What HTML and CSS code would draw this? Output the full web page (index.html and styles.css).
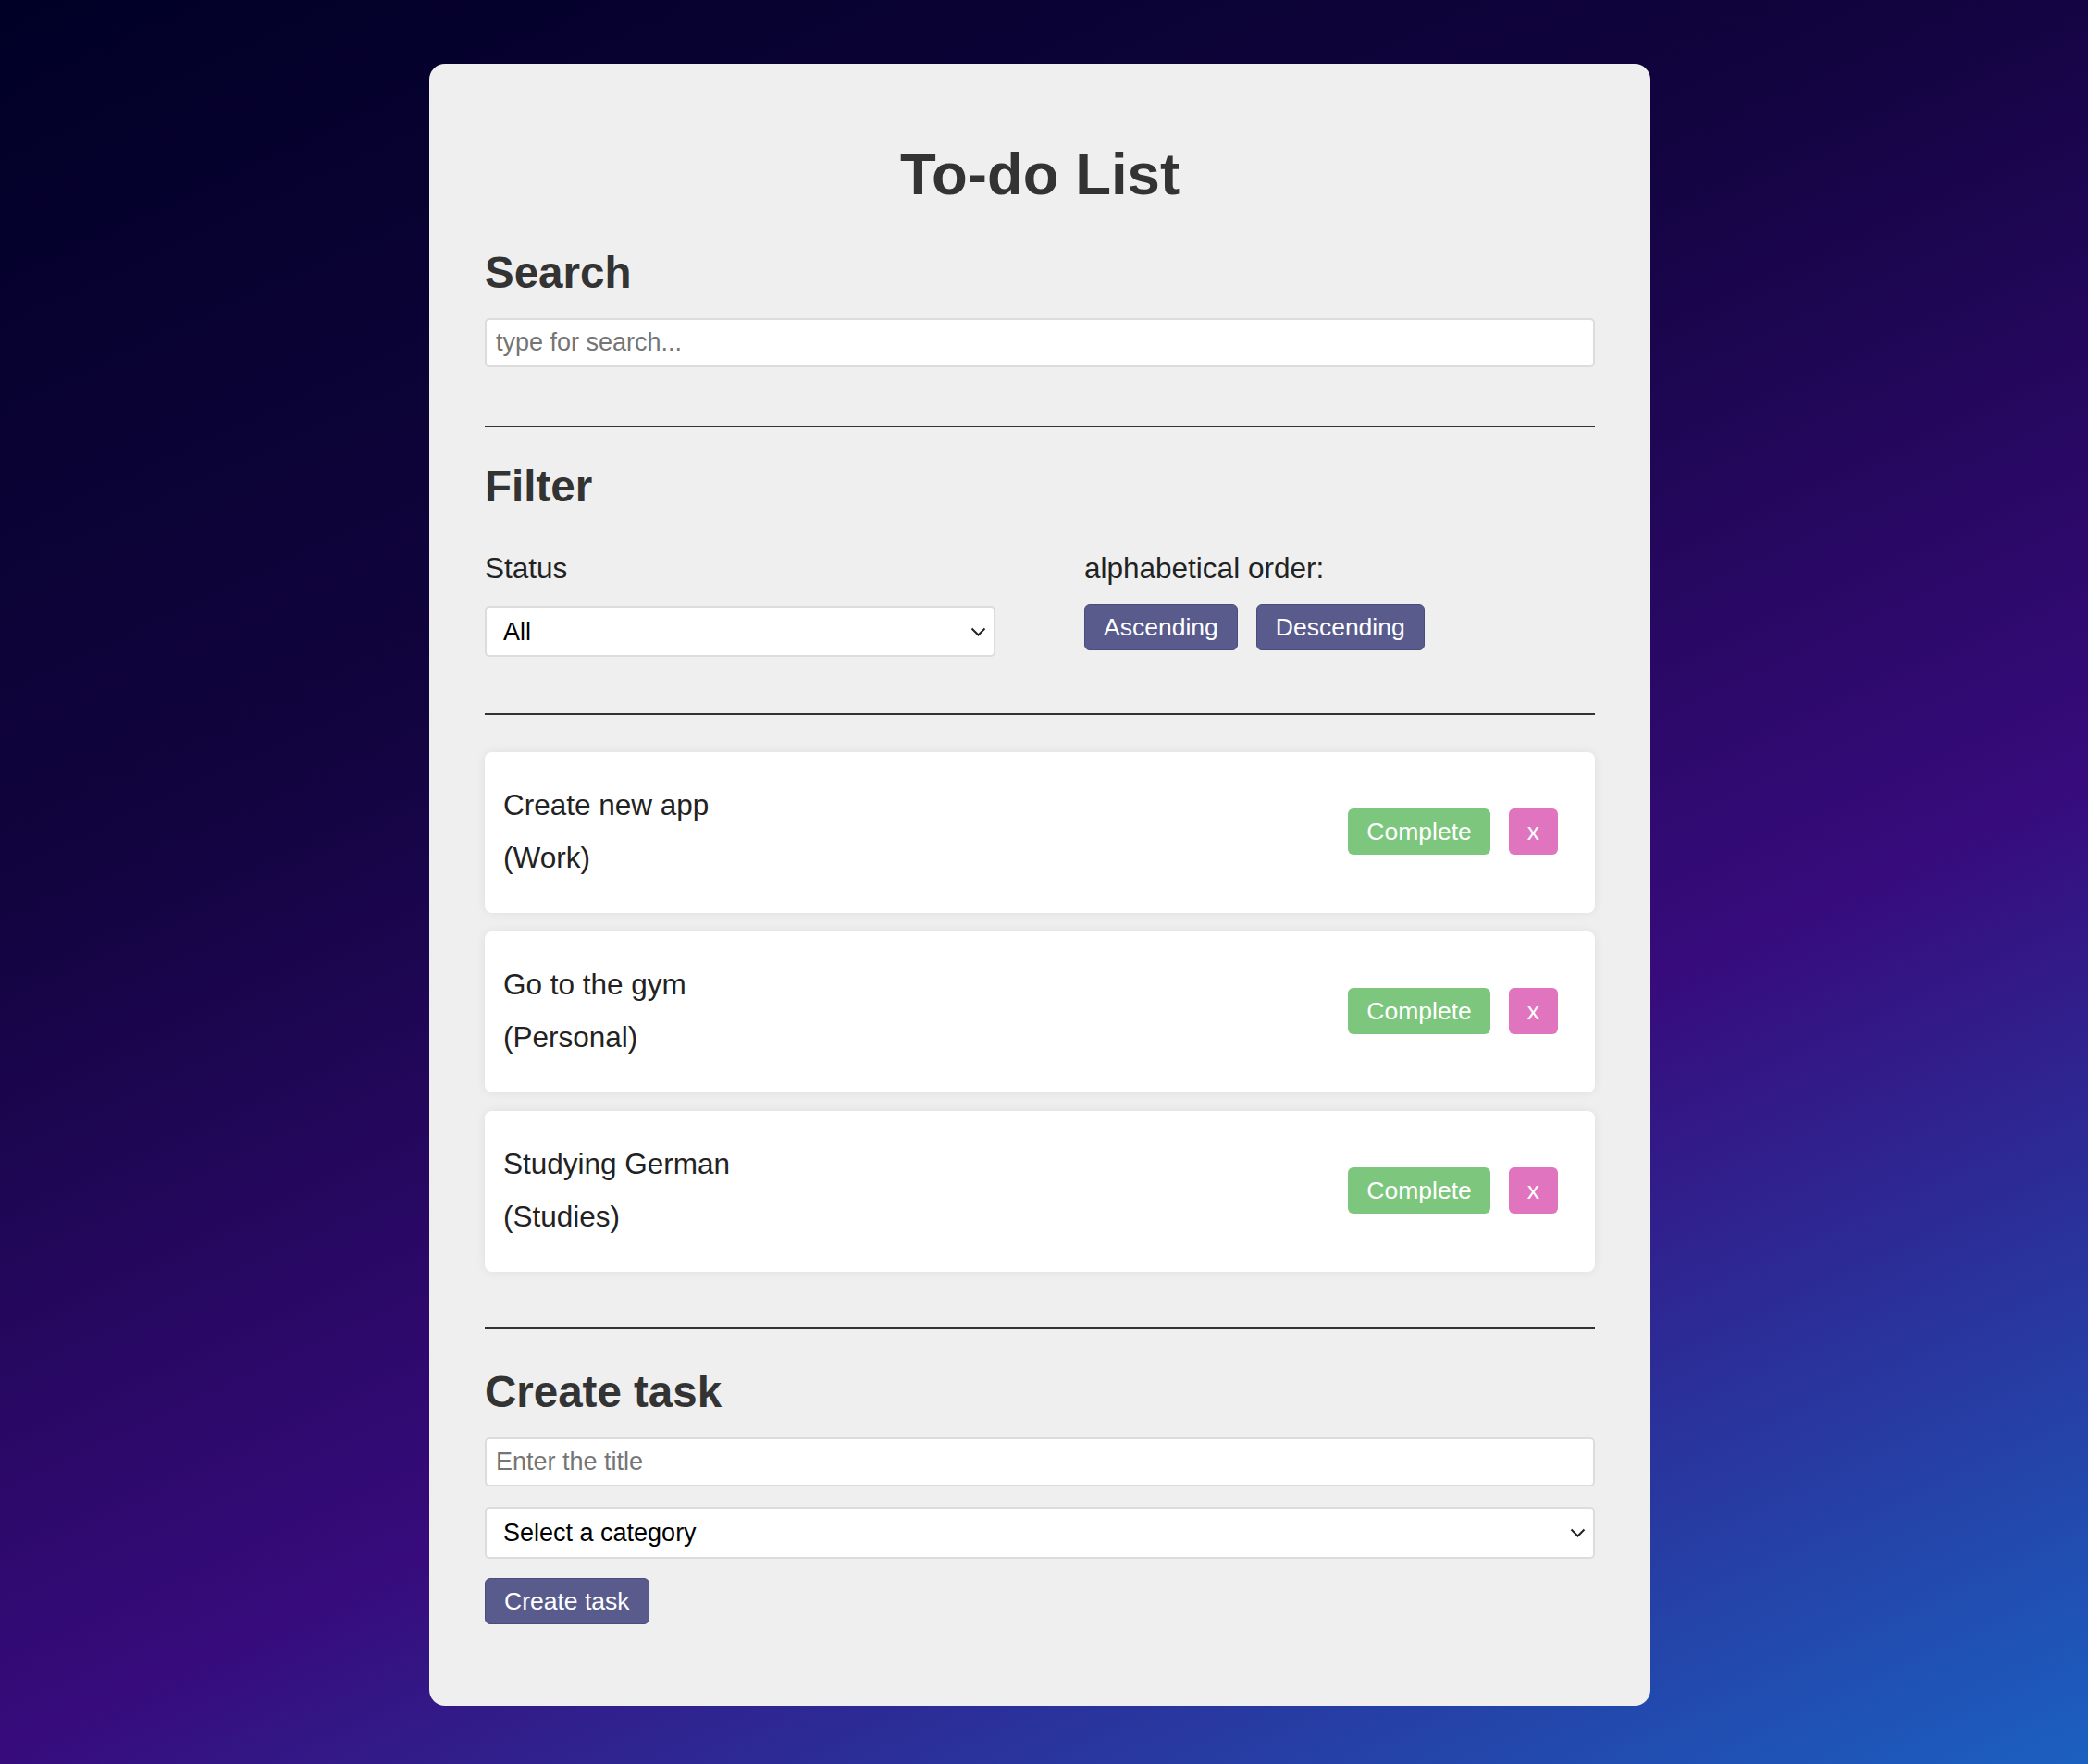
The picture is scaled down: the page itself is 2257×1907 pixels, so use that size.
FILE: index.html
```html
<!DOCTYPE html>
<html lang="en">
<head>
<meta charset="utf-8">
<title>To-do List</title>
<link rel="stylesheet" href="styles.css">
</head>
<body>
<main class="card">
  <h1 class="title">To-do List</h1>

  <section class="search">
    <h2 class="section-title">Search</h2>
    <input class="text-input search-input" type="text" placeholder="type for search...">
  </section>

  <hr class="divider">

  <section class="filter">
    <h2 class="section-title">Filter</h2>
    <div class="filter-grid">
      <div class="filter-col">
        <p class="label">Status</p>
        <div class="select-wrap status-select">
          <select class="select">
            <option>All</option>
            <option>Completed</option>
            <option>Incomplete</option>
          </select>
          <svg class="chevron" width="17" height="10" viewBox="0 0 17 10" aria-hidden="true"><polyline points="1.5,1.5 8.5,8.5 15.5,1.5" fill="none" stroke="#222" stroke-width="2"/></svg>
        </div>
      </div>
      <div class="filter-col">
        <p class="label">alphabetical order:</p>
        <div class="order-buttons">
          <button class="btn btn-primary">Ascending</button>
          <button class="btn btn-primary">Descending</button>
        </div>
      </div>
    </div>
  </section>

  <hr class="divider divider-tasks">

  <ul class="task-list">
    <li class="task">
      <div class="task-text">
        <p class="task-title">Create new app</p>
        <p class="task-category">(Work)</p>
      </div>
      <div class="task-actions">
        <button class="btn btn-complete">Complete</button>
        <button class="btn btn-remove">x</button>
      </div>
    </li>
    <li class="task">
      <div class="task-text">
        <p class="task-title">Go to the gym</p>
        <p class="task-category">(Personal)</p>
      </div>
      <div class="task-actions">
        <button class="btn btn-complete">Complete</button>
        <button class="btn btn-remove">x</button>
      </div>
    </li>
    <li class="task">
      <div class="task-text">
        <p class="task-title">Studying German</p>
        <p class="task-category">(Studies)</p>
      </div>
      <div class="task-actions">
        <button class="btn btn-complete">Complete</button>
        <button class="btn btn-remove">x</button>
      </div>
    </li>
  </ul>

  <hr class="divider divider-create">

  <section class="create">
    <h2 class="section-title create-title">Create task</h2>
    <input class="text-input title-input" type="text" placeholder="Enter the title">
    <div class="select-wrap category-select">
      <select class="select">
        <option>Select a category</option>
        <option>Work</option>
        <option>Personal</option>
        <option>Studies</option>
      </select>
      <svg class="chevron" width="17" height="10" viewBox="0 0 17 10" aria-hidden="true"><polyline points="1.5,1.5 8.5,8.5 15.5,1.5" fill="none" stroke="#222" stroke-width="2"/></svg>
    </div>
    <button class="btn btn-primary btn-create">Create task</button>
  </section>
</main>
</body>
</html>
```

FILE: styles.css
```css
* {
  box-sizing: border-box;
}

html {
  min-height: 100%;
  background: linear-gradient(155deg, #000026 0%, #12043f 33%, #370b7c 64%, #1b60c0 100%);
}

body {
  margin: 0;
  min-height: 100vh;
  padding: 69px 9px 58px 0;
  font-family: "Liberation Sans", Arial, sans-serif;
  color: #222;
}

.card {
  width: 1320px;
  margin: 0 auto;
  padding: 60px 60px 88px;
  background: #efefef;
  border-radius: 17px;
  display: flex;
  flex-direction: column;
}

.title {
  margin: 23px 0 0;
  font-size: 63.5px;
  line-height: 72px;
  font-weight: 700;
  text-align: center;
  color: #333;
}

.section-title {
  margin: 0;
  font-size: 47.5px;
  line-height: 54px;
  font-weight: 700;
  color: #333;
}

.search {
  margin-top: 44px;
  display: flex;
  flex-direction: column;
}

.text-input {
  display: block;
  width: 100%;
  height: 53px;
  margin: 22px 0 0;
  padding: 0 10px;
  border: 2px solid #dcdcdc;
  border-radius: 5px;
  background: #fff;
  font-family: "Liberation Sans", Arial, sans-serif;
  font-size: 27px;
  color: #222;
  outline: none;
}

.text-input::placeholder {
  color: #757575;
}

.divider {
  margin: 63px 0 0;
  height: 2px;
  border: 0;
  background: #333;
}

.filter {
  margin-top: 37px;
}

.filter-grid {
  margin-top: 43px;
  display: grid;
  grid-template-columns: 1fr 1fr;
  column-gap: 96px;
}

.filter-col {
  display: flex;
  flex-direction: column;
}

.label {
  margin: 0;
  font-size: 31.5px;
  line-height: 36px;
  color: #222;
}

.select-wrap {
  position: relative;
}

.status-select {
  margin-top: 23px;
}

.select {
  display: block;
  width: 100%;
  height: 55px;
  padding: 0 18px;
  border: 2px solid #dcdcdc;
  border-radius: 5px;
  background: #fff;
  font-family: "Liberation Sans", Arial, sans-serif;
  font-size: 27px;
  color: #000;
  -webkit-appearance: none;
  appearance: none;
  outline: none;
}

.chevron {
  position: absolute;
  right: 10px;
  top: 50%;
  margin-top: -5px;
  pointer-events: none;
}

.order-buttons {
  margin-top: 21px;
  display: flex;
  gap: 20px;
}

.btn {
  height: 50px;
  padding: 0 20px;
  border: 0;
  border-radius: 6px;
  font-family: "Liberation Sans", Arial, sans-serif;
  font-size: 26.5px;
  color: #fff;
  cursor: pointer;
}

.btn-primary {
  background: #595b8c;
  border: 1px solid #4a4c7e;
}

.divider-tasks {
  margin-top: 61px;
}

.task-list {
  list-style: none;
  margin: 40px 0 0;
  padding: 0;
  display: flex;
  flex-direction: column;
  gap: 20px;
}

.task {
  height: 174px;
  padding: 0 40px 0 20px;
  background: #fff;
  border-radius: 8px;
  box-shadow: 0 0 12px rgba(0, 0, 0, 0.07);
  display: flex;
  align-items: center;
  justify-content: space-between;
}

.task-text {
  display: flex;
  flex-direction: column;
  gap: 21px;
  margin-top: -3px;
}

.task-title,
.task-category {
  margin: 0;
  font-size: 31.5px;
  line-height: 36.5px;
  color: #222;
}

.task-actions {
  display: flex;
  gap: 20px;
  margin-top: -2px;
}

.btn-complete {
  background: #7dc67e;
}

.btn-remove {
  background: #e074bf;
}

.divider-create {
  margin-top: 60px;
}

.create {
  margin-top: 41px;
  display: flex;
  flex-direction: column;
  align-items: flex-start;
}

.category-select {
  width: 100%;
  margin-top: 22px;
}

.category-select .select {
  height: 56px;
}

.btn-create {
  margin-top: 21px;
}
```
